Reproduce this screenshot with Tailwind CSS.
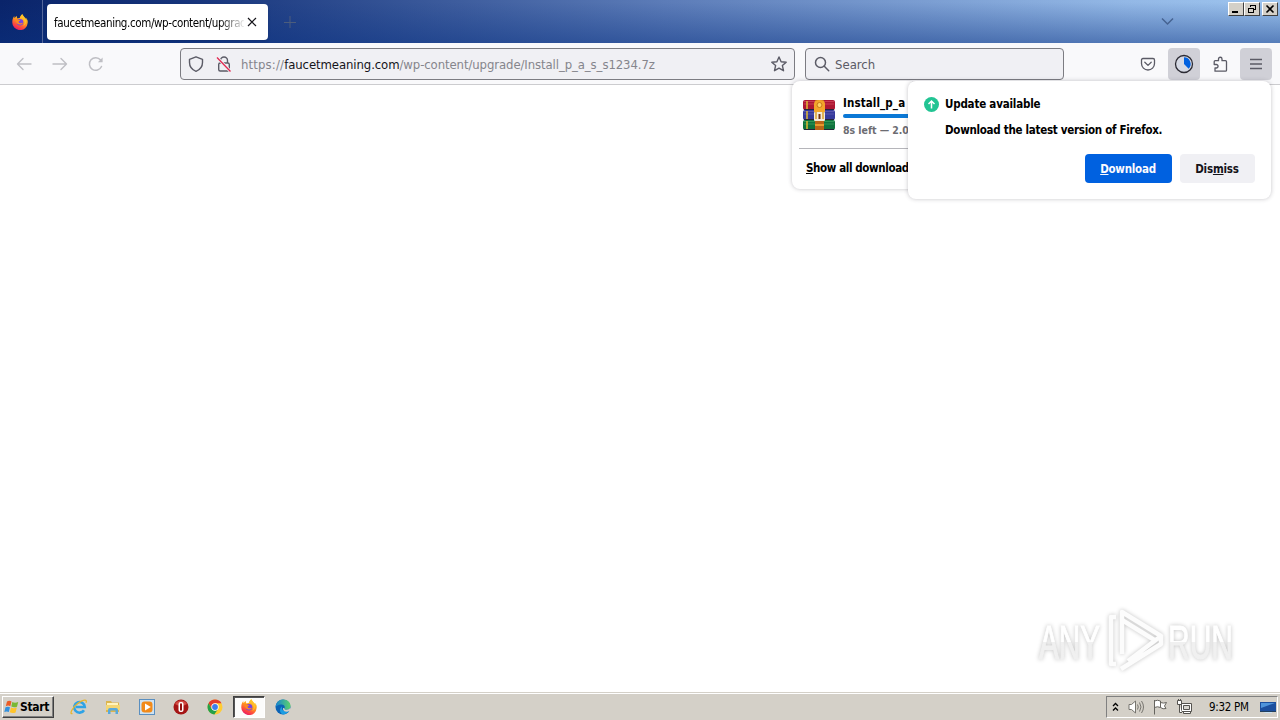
<!DOCTYPE html>
<html lang="en">
<head>
<meta charset="utf-8">
<title>Firefox</title>
<script src="https://cdn.jsdelivr.net/npm/@tailwindcss/browser@4"></script>
</head>
<body class="w-[1280px] h-[720px] overflow-hidden bg-white font-['DejaVu_Sans_Condensed','DejaVu_Sans',sans-serif] text-black">
<svg class="absolute size-0">
  <defs>
    <linearGradient id="fx" x1=".8" y1="0" x2=".3" y2="1"><stop offset="0" stop-color="#ffe226"/><stop offset=".45" stop-color="#ff9a1f"/><stop offset=".75" stop-color="#ff4a3d"/><stop offset="1" stop-color="#e5186b"/></linearGradient>
    <symbol id="firefox" viewBox="0 0 16 16">
      <path d="M15.300 5.800c-.4-.9-1.100-1.800-1.700-2.100.5.9.8 1.700.9 2.400C13.600 3.800 12 2.900 10.800 1c-.3-.4-.3-.7-.3-1-1.500.9-2.300 2.500-2.500 3.800-.8 0-1.500.2-2.200.6C4.900 3.900 4.900 2.700 5 2.100c-1 .4-1.700 1.200-2.300 1.800C2.300 3.500 2.300 2.600 2.400 2 1.200 3.200.3 5.300.3 8a7.700 7.700 0 0 0 15.400.8c.1-1 0-2.100-.4-3z" fill="url(#fx)"/>
      <circle cx="8" cy="8.300" r="3.300" fill="#7542e5"/>
      <path d="M3 5.500c1.300-.8 2.700-.4 3.200.3.700.2 1.800.1 2 .3 0 .6-1 1-1.600 1.500-.1 1 .9 1.900 2 1.700 1-.2 1.500-.7 2.200-.3-.5 1-1.600 1.600-2.700 1.600C5.500 10.600 3.600 8.500 3 5.500z" fill="#ff8a1e"/>
      <path d="M8 3.800c2.500.1 4.600 1.800 4.700 4.700 0 1.500-.8 2.800-1.600 3.500 2.300-.8 3.400-3.300 2.900-5.700C13.200 4.100 11.400 3 10.500.5 9 1.600 8.200 2.700 8 3.800z" fill="#ffc02a"/>
    </symbol>
  </defs>
</svg>
<div class="relative flex h-[720px] w-[1280px] flex-col overflow-hidden">

  <!-- Tab strip -->
  <header class="relative flex h-[43px] shrink-0 items-start bg-[linear-gradient(to_bottom,rgba(10,50,130,0)_5%,rgba(10,50,130,0.48)),linear-gradient(to_right,#0a246a_0%,#17357c_15%,#5c7cb8_52%,#93b8e6_88%,#9dc4ee_100%)]">
    <div class="flex h-[43px] w-[43px] items-center border-r border-[#54679b] pl-3"><svg class="size-4"><use href="#firefox"/></svg></div>
    <div class="mt-1 ml-1 flex h-9 w-[221px] items-center rounded bg-white pl-[7px] shadow-sm">
      <div class="w-[190px] overflow-hidden whitespace-nowrap pt-[3px] text-[11.500px] tracking-[-0.38px] [mask-image:linear-gradient(to_right,#000_165px,transparent_192px)]">faucetmeaning.com/wp-content/upgrade</div>
      <svg class="ml-[3px] size-[10px]" viewBox="0 0 10 10" stroke="#15141a" stroke-width="1.200" fill="none"><path d="M1 1l8 8M9 1L1 9"/></svg>
    </div>
    <svg class="mt-4 ml-4 size-3" viewBox="0 0 12 12" stroke="#4c5d7d" fill="none"><path d="M6 0v12M0 6.500h12"/></svg>
    <svg class="mt-[17px] ml-[865px] h-[9px] w-[13px]" viewBox="0 0 13 9" stroke="#466391" stroke-width="1.500" fill="none"><path d="M1 1.500l5.500 5.500L12 1.500"/></svg>
    <div class="ml-[54px] mt-[2px] flex">
      <div class="flex h-[14px] w-4 border border-t-white border-l-white border-r-[#404040] border-b-[#404040] bg-[#d4d0c8]"><svg class="h-3 w-[14px]"><path d="M3 8h6v2H3z"/></svg></div>
      <div class="flex h-[14px] w-4 border border-t-white border-l-white border-r-[#404040] border-b-[#404040] bg-[#d4d0c8]"><svg class="h-3 w-[14px]" fill="none" stroke="#000" shape-rendering="crispEdges"><path d="M5.500 4V2.500h5v4H9M5 2h6M3.500 5.500h5v4h-5zM3 5h6"/></svg></div>
      <div class="ml-[2px] flex h-[14px] w-4 border border-t-white border-l-white border-r-[#404040] border-b-[#404040] bg-[#d4d0c8]"><svg class="h-3 w-[14px]" stroke="#000" stroke-width="1.600"><path d="M3.500 2.500l7 7M10.500 2.500l-7 7"/></svg></div>
    </div>
  </header>

  <!-- Navigation toolbar -->
  <nav class="flex h-[42px] shrink-0 items-center border-b border-[#cccccf] bg-[#f9f9fb]">
    <div class="flex w-[180px] gap-5 pt-px pl-4 text-[#bfbfc4]">
      <svg class="size-4" fill="none" stroke="currentColor" stroke-width="1.400" stroke-linecap="round" stroke-linejoin="round"><path d="M1.500 8h13.500M7 2.500L1.500 8 7 13.500"/></svg>
      <svg class="size-4" fill="none" stroke="currentColor" stroke-width="1.400" stroke-linecap="round" stroke-linejoin="round"><path d="M1 8h13.500M9 2.500L14.500 8 9 13.500"/></svg>
      <svg class="size-4" fill="none" stroke="currentColor" stroke-width="1.500" stroke-linecap="round"><path d="M13.500 10.500A6.300 6.300 0 1 1 12.600 4"/><path d="M14.600 1.500v4.700H9.900z" fill="currentColor" stroke="none"/></svg>
    </div>
    <div class="flex h-8 w-[615px] items-center rounded border border-[#7c7c82] bg-[#f0f0f4] text-[#5b5b66]">
      <svg class="ml-[7px] size-4" fill="none" stroke="currentColor" stroke-width="1.400" stroke-linejoin="round"><path d="M8 .8l6.500 2.500v3.200c0 3.800-2.500 7.200-6.500 8.800C4 13.700 1.500 10.300 1.500 6.500V3.300z"/></svg>
      <svg class="ml-3 size-4" fill="none" stroke="currentColor" stroke-width="1.400"><path d="M4.500 7V4.500a3.500 3.500 0 0 1 7 0V7"/><rect x="2.700" y="7" width="10.600" height="8" rx="1.500"/><path d="M1 1.500l13.500 14" stroke="#f0f0f4" stroke-width="3"/><path d="M1 1.500l13.500 14" stroke="#e22850" stroke-width="1.300"/></svg>
      <div class="ml-[9px] flex-1 whitespace-nowrap pt-[2px] text-[13px] tracking-[-0.09px] text-[#85858c]"><span class="tracking-[0.15px]">https://</span><span class="text-[#15141a]">faucetmeaning.com</span>/wp-content/upgrade/Install_p_a_s_s1234.7z</div>
      <svg class="mr-[7px] size-4" fill="none" stroke="currentColor" stroke-width="1.400" stroke-linejoin="round"><path d="M8 1l2.100 4.700 5.100.5-3.800 3.400 1.100 5.100L8 12.100l-4.500 2.600 1.100-5.100L.8 6.200l5.100-.5z"/></svg>
    </div>
    <div class="ml-[10px] flex h-8 w-[259px] items-center rounded border border-[#7c7c82] bg-[#f0f0f4] text-[#5b5b66]">
      <svg class="ml-2 size-4" fill="none" stroke="currentColor" stroke-width="1.500" stroke-linecap="round"><circle cx="6.500" cy="6.500" r="5"/><path d="M10.300 10.300l4.400 4.400"/></svg>
      <span class="ml-[5px] pt-[2px] text-[13px]">Search</span>
    </div>
    <div class="ml-[68px] flex gap-1 text-[#5b5b66]">
      <div class="grid size-8 place-items-center"><svg class="size-4" fill="none" stroke="currentColor" stroke-width="1.300" stroke-linecap="round" stroke-linejoin="round"><path d="M3 2.500h10q1.500 0 1.500 1.500v3.500a6.500 6.500 0 0 1-13 0V4q0-1.500 1.500-1.500zM4.800 6.300L8 9.400l3.200-3.100"/></svg></div>
      <div class="grid size-8 place-items-center rounded bg-[#d0d0d7]"><svg class="size-5" fill="none"><circle cx="10" cy="10" r="8.500" stroke="#2b2a33" stroke-width="1.300" fill="#d5d9e4"/><path d="M10 10V3.300A6.700 6.700 0 0 1 14.700 14.700z" fill="#0061e0"/></svg></div>
      <div class="grid size-8 place-items-center"><svg class="size-4" fill="none" stroke="currentColor" stroke-width="1.300" stroke-linejoin="round"><path d="M3 15.200V12h1.300a1.700 1.700 0 0 0 0-3.500H2.200V5.700q0-1 1-1H6.500V3A1.700 1.700 0 0 1 10 3v1.700h3.500q1 0 1 1v8.500q0 1-1 1z"/></svg></div>
      <div class="grid size-8 place-items-center rounded bg-[#d0d0d7]"><svg class="size-4" stroke="currentColor" stroke-width="1.300"><path d="M2 3.500h12M2 8h12M2 12.500h12"/></svg></div>
    </div>
  </nav>

  <main class="relative flex-1 bg-white">
    <!-- Watermark -->
    <svg class="absolute top-[515px] left-[1020px] h-[80px] w-[230px] drop-shadow-[0_0_2px_rgba(0,0,0,0.24)]" viewBox="0 0 230 80">
      <defs><linearGradient id="wm" x2="0" y2="1"><stop offset=".5" stop-color="#fff"/><stop offset=".5" stop-color="#f0f0f0"/></linearGradient></defs>
      <g font-family="Liberation Sans Narrow, Liberation Sans, sans-serif" font-size="49" fill="url(#wm)" stroke="url(#wm)" stroke-width="1">
        <text x="19" y="59" textLength="61" lengthAdjust="spacingAndGlyphs">ANY</text>
        <text x="148" y="59" textLength="65" lengthAdjust="spacingAndGlyphs">RUN</text>
      </g>
      <g fill="none" stroke="#fcfcfc" stroke-width="4.500" stroke-linejoin="round"><path d="M102 54V12l39 24-33 25M96 17h-5v47h5M101 69l40-25V36"/><path d="M102 20l34 21"/></g>
    </svg>
  </main>

  <!-- Taskbar -->
  <footer class="flex h-[28px] shrink-0 items-center border-t border-[#d4d0c8] bg-[#d4d0c8] pt-px shadow-[inset_0_1px_0_#fff]">
    <div class="ml-[2px] flex h-[22px] w-[52px] items-center border border-t-white border-l-white border-r-[#404040] border-b-[#404040] pl-px shadow-[inset_-1px_-1px_0_#808080]">
      <svg class="size-4"><path d="M3 2.500q2.500-1.300 4.500.1L6.300 7.300Q4.300 6 1.800 7.200z" fill="#ec5c25"/><path d="M8.300 3q2.500 1.300 5.900 0L13 7.700q-3 1.200-5.700-.2z" fill="#79b833"/><path d="M1.500 8.300q2.500-1.200 4.500 0l-1.200 4.800q-2-1.300-4.500-.1z" fill="#3391de"/><path d="M7 8.500q2.700 1.300 5.800.1l-1.200 4.800q-3 1.200-5.800-.2z" fill="#ffc42a"/></svg>
      <span class="text-[12px] font-bold tracking-[-0.35px]">Start</span>
    </div>
    <div class="ml-[11px] flex items-center gap-[2px]">
      <div class="grid h-[22px] w-8 place-items-center pr-1"><svg class="size-[18px]" fill="none"><path d="M14 12.200a5.300 5.300 0 1 1 .8-3.200H6" stroke="#2fa3e6" stroke-width="2.600"/><path d="M2.500 15.500C-1 17 2 9.500 8 5.300s9.500-4 8-.6" stroke="#e8b52c" stroke-width="1.300"/></svg></div>
      <div class="grid h-[22px] w-8 place-items-center pr-1"><svg class="size-4"><path d="M1 2h5l1 1.500h7V13H1z" fill="#dcb54e"/><path d="M2 4h11v4H2z" fill="#fff3bd"/><path d="M1 6h14v5H1z" fill="#f3d675"/><path d="M3 15v-4q0-2 2-2h6q2 0 2 2v4h-2.500v-3.500h-5V15z" fill="#58a9dc"/></svg></div>
      <div class="grid h-[22px] w-8 place-items-center pr-1"><svg class="size-4"><rect x=".5" y=".5" width="15" height="15" fill="#cfe2f1" stroke="#5a8fc0"/><rect x="2.500" y="2.500" width="11" height="11" rx="3" fill="#f28a19"/><path d="M6 4.500v7L11.800 8z" fill="#fff"/></svg></div>
      <div class="grid h-[22px] w-8 place-items-center pr-1"><svg class="size-4"><circle cx="8" cy="8" r="7.500" fill="#a51515"/><path d="M2 5a7 7 0 0 1 12 0q-6 4-12 0z" fill="#d34b43"/><rect x="5.500" y="3" width="5" height="10" rx="2" fill="#fff"/><rect x="7" y="4.300" width="2" height="7.400" rx="1" fill="#941111"/></svg></div>
      <div class="grid h-[22px] w-8 place-items-center pr-1"><svg class="size-4" viewBox="0 0 16 16"><circle cx="8" cy="8" r="7.500" fill="#fc3"/><path d="M1.500 4.250A7.500 7.500 0 0 1 14.500 4.250H8L4.750 9.900z" fill="#e33b2e"/><path d="M1.500 4.250L4.750 9.900 8 11.750l-.8 3.700A7.500 7.500 0 0 1 1.500 4.250z" fill="#24a148"/><path d="M7.200 15.500l4-5.600L8 11.800 4.750 9.900z" fill="#24a148"/><circle cx="8" cy="8" r="3.700" fill="#fff"/><circle cx="8" cy="8" r="2.900" fill="#3b7ded"/></svg></div>
      <div class="-ml-[2px] grid h-[22px] w-8 place-items-center border border-t-[#404040] border-l-[#404040] border-r-white border-b-white bg-[#fcfcfb] shadow-[inset_1px_1px_0_#555]"><svg class="size-4"><use href="#firefox"/></svg></div>
      <div class="grid h-[22px] w-8 place-items-center"><svg class="size-4"><defs><linearGradient id="edge"><stop stop-color="#1683d2"/><stop offset="1" stop-color="#5ed36a"/></linearGradient></defs><circle cx="8" cy="8" r="7.500" fill="#0c63b5"/><path d="M.5 8C1 3.500 4 .5 8 .5c4.500 0 7.500 3 7.500 6.300 0 2.500-1.700 3.900-4 3.900-1.800 0-2.500-.6-2-1.500C10.500 7 8.500 5.500 6 5.500 3.500 5.500 1 7 .5 8z" fill="url(#edge)"/><path d="M7 7.500c-1 4 3 6 7 4.300-1.500 2.700-4 3.700-6 3.700C4 14 4.500 9 7 7.500z" fill="#1b9de2"/><path d="M9.500 9.200c-.5.900.2 1.500 2 1.500 1.700 0 3-.7 3.700-2l.8 2.800-3 1c-3 .8-5.500-1-5-3.500z" fill="#d4d0c8"/></svg></div>
    </div>
    <div class="ml-auto mr-[2px] flex h-[22px] w-[172px] items-center border border-t-[#808080] border-l-[#808080] border-r-white border-b-white">
      <svg class="ml-[5px] h-[10px] w-[7px]" fill="none" stroke="#000" stroke-width="1.300"><path d="M1 4l2.500-2.500L6 4M1 8.500L3.500 6 6 8.500"/></svg>
      <svg class="ml-[9px] size-4" fill="#fff" stroke="#77756f"><path d="M1 5.500h2.500L7.500 2v12L3.500 10.500H1z"/><path d="M9.500 5.500q1.500 2.500 0 5M11.500 3.500q3 4.500 0 9M13.500 2q4 6 0 12" fill="none"/></svg>
      <svg class="ml-2 size-4" fill="#fff" stroke="#66645f"><path d="M2.500 1v14.500M2.500 2q3-1.500 6 0v6.500q-3-1.500-6 0M8.500 3.500q3 1.200 6 0L12.500 7l1.500 2.500q-3 1-5.500-1"/></svg>
      <svg class="ml-2 size-4" fill="#fff" stroke="#55534f"><path d="M5.500 4.500h10v8h-10zM7.500 14.500h7v-2h-7z"/><path d="M7.500 6.500h6v4h-6z" fill="#d8d6d0"/><path d="M1.500 1.500h4v4h-4zM2.500 0v2M4.500 0v2M3.500 5.500v8H6"/></svg>
      <span class="ml-[17px] pt-px whitespace-nowrap text-[11.500px] tracking-[-0.3px]">9:32 PM</span>
      <svg class="ml-auto mr-px size-4"><path d="M0 3h16v9H0z" fill="#1c4f9e"/><path d="M1 4h14L1 9z" fill="#4f94da"/><path d="M0 12h12v2H6z" fill="#c9e1f5"/><path d="M0 12h16v1H0z" fill="#22405f"/></svg>
    </div>
  </footer>

  <!-- Downloads panel, its right part lies under the notification -->
  <section class="absolute top-[81px] left-[792px] h-[108px] w-[120px] overflow-hidden rounded-l-lg bg-white pl-[7px] text-[11.500px] font-bold whitespace-nowrap shadow-[0_0_4px_rgba(58,57,68,0.3)]">
    <div class="flex h-[68px] w-[280px] border-b border-[#b5b5ba]">
      <svg class="mt-[18px] ml-1 size-8" viewBox="0 0 32 32">
        <rect y="1" width="32" height="10" rx="2" fill="#ad1833"/><path d="M1 2.500h30M1 5h30" stroke="#c83c52"/>
        <rect y="11" width="32" height="10" rx="2" fill="#363a9c"/><path d="M1 12.500h30M1 15h30" stroke="#5754ad"/>
        <rect y="21" width="32" height="10" rx="2" fill="#10733e"/><path d="M1 22.500h30M1 25h30" stroke="#2f9556"/>
        <path d="M1 10.500h30M1 20.500h30M1 30.500h30" stroke="#272339"/><path d="M4 2v8M4 12v8M4 22v8" stroke="#e0b833" stroke-width="1.500"/>
        <path d="M12 1h9v30h-9z" fill="#b96518"/><path d="M11 13V5q0-4 5.500-4T22 5v8z" fill="#f3a62a"/><circle cx="16.500" cy="6" r="2.500" fill="#ffd261" stroke="#c87a1a"/><rect x="11" y="13" width="11" height="9" rx="1" fill="#f3ead9"/><path d="M13 13v7M20 13v7" stroke="#dba12a" stroke-width="1.500"/><path d="M16.500 15v5" stroke="#763312" stroke-width="2"/><path d="M12 26h9" stroke="#e79a2d" stroke-width="2"/>
      </svg>
      <div class="ml-2 flex w-[230px] flex-col pt-[15px]">
        <div class="h-[14px] leading-[14px] tracking-[0.1px]">Install_p_a</div>
        <div class="mt-[4px] h-1 rounded-full bg-[#0a78d6]"></div>
        <div class="mt-[5px] text-[10.500px] leading-[14px] tracking-[-0.05px] text-[#6c6c72]">8s left — 2.0</div>
      </div>
    </div>
    <div class="mt-[12px] ml-[7px] leading-[14px] tracking-[-0.38px]"><span class="underline">S</span>how all downloads</div>
  </section>

  <!-- Update notification -->
  <section class="absolute top-[81px] left-[908px] flex h-[118px] w-[363px] flex-col rounded-lg bg-white pl-4 pr-4 text-[11.500px] font-bold whitespace-nowrap shadow-[0_0_4px_rgba(58,57,68,0.3)]">
    <div class="mt-4 flex items-center">
      <svg class="size-[15px]" viewBox="0 0 15 15"><circle cx="7.500" cy="7.500" r="7.500" fill="#22c493"/><path d="M7.500 11.500V4M4.500 7l3-3 3 3" fill="none" stroke="#fff" stroke-width="1.500"/></svg>
      <span class="-mt-px ml-[6px] leading-[14px] tracking-[-0.2px]">Update available</span>
    </div>
    <p class="mt-[11px] ml-[21px] leading-[14px] tracking-[-0.28px]">Download the latest version of Firefox.</p>
    <div class="mt-[17px] flex justify-end gap-2">
      <div class="grid h-[29px] w-[87px] place-items-center rounded bg-[#0061e0] pt-[3px] pr-px text-[#fbfbfe]"><span class="tracking-[-0.25px]"><span class="underline">D</span>ownload</span></div>
      <div class="grid h-[29px] w-[75px] place-items-center rounded bg-[#f0f0f4] pt-[3px] pr-px text-[#15141a]"><span class="tracking-[-0.2px]">Dis<span class="underline">m</span>iss</span></div>
    </div>
  </section>
</div>
</body>
</html>
